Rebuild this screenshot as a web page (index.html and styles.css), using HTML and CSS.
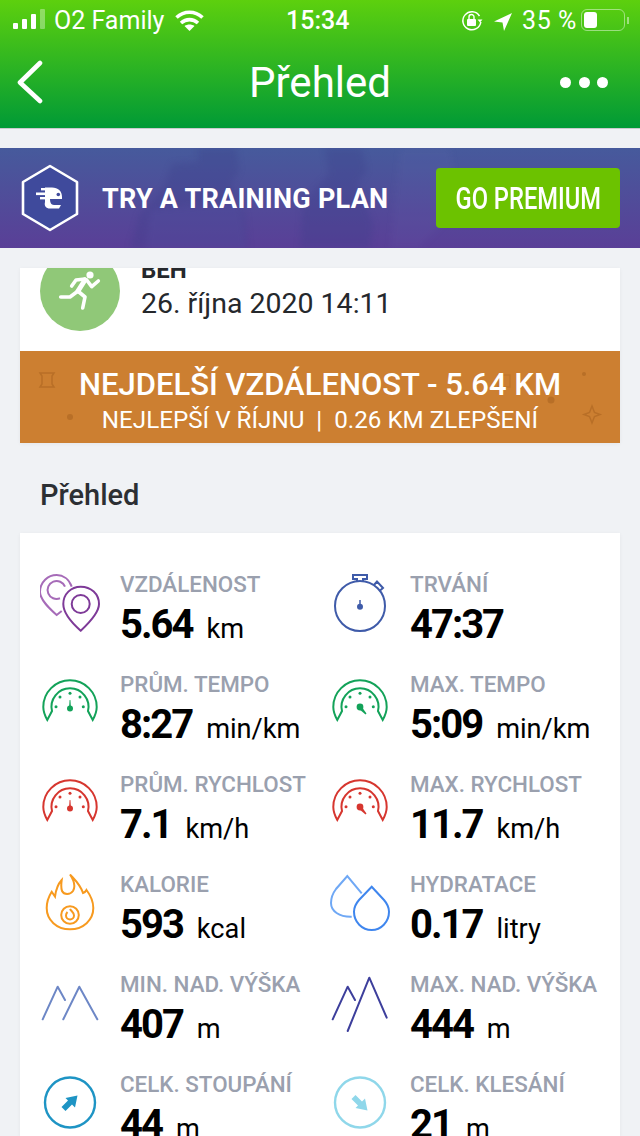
FILE: index.html
```html
<!DOCTYPE html>
<html>
<head>
  <meta charset="UTF-8" />
  <title>Přehled</title>
  <link rel="stylesheet" href="styles.css">
</head>
<body>
  <div class="top">
    <div class="status">
      <div class="status-left">
        <svg width="32" height="24" viewBox="0 0 32 24"><rect x="0" y="15" width="5" height="6" rx="1" fill="#fff"/><rect x="9" y="11" width="5" height="10" rx="1" fill="#fff"/><rect x="18" y="6" width="5" height="15" rx="1" fill="#fff"/><rect x="27" y="1" width="5" height="20" rx="1" fill="#fff" opacity="0.35"/></svg>
        <span class="carrier">O2 Family</span>
        <svg width="30" height="24" viewBox="0 0 30 24" fill="none" stroke="#fff" stroke-width="3.600"><path d="M1.500 9.500C9 2.500 20 2.500 27.500 9.500"/><path d="M6 15C11 10.500 18 10.500 23 15"/><path d="M14.500 23L9.500 18c3-2 7-2 10 0z" fill="#fff" stroke="none"/></svg>
      </div>
      <div class="clock">15:34</div>
      <div class="status-right">
        <svg width="22" height="24" viewBox="0 0 22 24" fill="none"><path d="M18.500 8A9 9 0 1 0 19.800 14" stroke="#fff" stroke-width="1.500"/><path d="M16.500 11.500h5l-2.500 3z" fill="#fff"/><rect x="6" y="11" width="9" height="7" rx="1" fill="#fff"/><path d="M8 11V9a2.500 2.500 0 0 1 5 0v2" stroke="#fff" stroke-width="1.400"/></svg>
        <svg class="arrow-gap" width="18" height="24" viewBox="0 0 18 24"><path d="M18 5L0 13.500l8.500 1 1.500 8.500z" fill="#fff"/></svg>
        <span class="battery-text">35 %</span>
        <div class="battery"><div class="battery-fill"></div></div>
        <div class="battery-nub"></div>
      </div>
    </div>
    <div class="nav">
      <svg class="back" width="28" height="44" viewBox="0 0 28 44" fill="none"><path d="M24 3L4 22.500 24 41" stroke="#fff" stroke-width="4.600" stroke-linecap="round" stroke-linejoin="round"/></svg>
      <div class="nav-title">Přehled</div>
      <div class="dots"><span></span><span></span><span></span></div>
    </div>
  </div>

  <div class="banner">
    <svg class="banner-photo" width="640" height="100" viewBox="0 0 640 100"><path d="M198 0h38l3 22-8 14 14 30 3 34H130l10-34 24-26 8-24 26-2z" fill="#3a3c88" opacity="0.28"/><path d="M325 0h36l6 22-10 14 16 40-3 24h-70l3-44 26-30z" fill="#3a3c88" opacity="0.28"/><path d="M150 62l90-8 6 46h-100z" fill="#6a63b8" opacity="0.14"/><path d="M400 0h50l10 60-40 40h-30z" fill="#7a80c0" opacity="0.07"/></svg>
    <svg class="hex" width="60" height="68" viewBox="0 0 60 68"><path d="M30 2l27 16v32L30 66 3 50V18z" fill="#3f4a9c" stroke="#fff" stroke-width="2.600" stroke-linejoin="round"/><path d="M25 23.500h7c6 0 10 3.500 10 9.500v2H30c0 3 1 6 4 6h7l-2 3.500h-9c-4 0-6-2.500-5-6.500z" fill="#fff"/><rect x="21" y="24" width="6" height="2.400" fill="#fff"/><rect x="16" y="28.500" width="11" height="2.600" fill="#fff"/><rect x="20" y="33" width="7" height="2.400" fill="#fff"/><circle cx="38.300" cy="30.500" r="1.800" fill="#3f4a9c"/></svg>
    <div class="banner-text">TRY A TRAINING PLAN</div>
    <div class="premium"><span>GO PREMIUM</span></div>
  </div>

  <div class="activity-clip">
    <div class="activity">
      <div class="activity-head">
        <div class="activity-circle">
          <svg width="80" height="80" viewBox="0 0 80 80" fill="none" stroke="#fff" stroke-width="3.600" stroke-linecap="round" stroke-linejoin="round"><circle cx="50" cy="24" r="3.600" fill="#fff" stroke="none"/><path d="M45 28l-9 1-4.300 6"/><path d="M46.700 29l5 6.700 6.600-5.700"/><path d="M45 29l-7 11" stroke-width="5"/><path d="M38 40l-8 6H20.700"/><path d="M39 41l6 5-2.300 11"/></svg>
        </div>
        <div class="activity-info">
          <div class="activity-type">BĚH</div>
          <div class="activity-date">26. října 2020 14:11</div>
        </div>
      </div>
      <div class="record">
        <svg class="record-bg" width="600" height="92" viewBox="0 0 600 92" fill="#b86f27" stroke="none"><path d="M20 22h14l-2 3v8l2 3H20l2-3v-8z" fill="none" stroke="#b86f27" stroke-width="1.500"/><circle cx="50" cy="66" r="3"/><circle cx="531" cy="49" r="3.500"/><circle cx="564" cy="23" r="2"/><path d="M478 24h12v12h-12z" fill="none" stroke="#b86f27" stroke-width="1.500" opacity="0.5"/><path d="M572 55l2.500 6.500 5.500 2-5.500 2-2.500 6.500-2.500-6.500-5.500-2 5.500-2z" fill="none" stroke="#b86f27" stroke-width="1.500"/></svg>
        <div class="record-title">NEJDELŠÍ VZDÁLENOST - 5.64 KM</div>
        <div class="record-sub">NEJLEPŠÍ V ŘÍJNU &nbsp;|&nbsp; 0.26 KM ZLEPŠENÍ</div>
      </div>
    </div>
  </div>

  <div class="section-title">Přehled</div>

  <div class="stats">
    <div class="stat">
      <svg class="icon" width="60" height="60" viewBox="0 0 60 60" fill="none" stroke-width="2"><path d="M31.700 12.700C29 5 23 1 16.700 1 8 1 0 8 0 18c0 8 10 17 16.700 23l5-4" stroke="#a66bb8"/><path d="M25 12.700a9 9 0 1 0-5 11.600" stroke="#a66bb8"/><path d="M40.700 12.700C51 12.700 59 20 59 30c0 9-10 19-18.300 26.700C32 49 23.300 39 23.300 30c0-10 7.700-17.300 17.400-17.300z" stroke="#7e3a98"/><circle cx="40.700" cy="30" r="9" stroke="#7e3a98"/></svg>
      <div>
        <div class="label">VZDÁLENOST</div>
        <div class="value">5.64<span class="unit">km</span></div>
      </div>
    </div>
    <div class="stat">
      <svg class="icon" width="60" height="60" viewBox="0 0 60 60" fill="none" stroke="#3f5ba9" stroke-width="2"><circle cx="30" cy="32" r="25"/><path d="M27 7V5h-4V1h14v4h-4v2M44 11l3-3.500 6 6.500-3.500 3"/><circle cx="30" cy="32.700" r="3" fill="#3f5ba9" stroke="none"/><path d="M30 32v-6" stroke-width="1.500"/></svg>
      <div>
        <div class="label">TRVÁNÍ</div>
        <div class="value">47:37</div>
      </div>
    </div>
    <div class="stat">
      <svg class="icon" width="60" height="60" viewBox="0 0 60 60" fill="none" stroke="#13a259" stroke-width="2"><path d="M7.300 46C4.500 41 3.300 37 3.300 33a26.700 26.700 0 0 1 53.400 0c0 4-1.200 8-4 13L48 37A18.500 18.500 0 1 0 12 37z"/><g fill="#13a259" stroke="none"><circle cx="30" cy="19.300" r="1.500"/><circle cx="20" cy="23" r="1.500"/><circle cx="40" cy="23" r="1.500"/><circle cx="16" cy="32.700" r="1.500"/><circle cx="43.300" cy="32.700" r="1.500"/><circle cx="30" cy="34.500" r="3"/><path d="M29 34l.6-8h.8l.6 8z"/></g></svg>
      <div>
        <div class="label">PRŮM. TEMPO</div>
        <div class="value">8:27<span class="unit">min/km</span></div>
      </div>
    </div>
    <div class="stat">
      <svg class="icon" width="60" height="60" viewBox="0 0 60 60" fill="none" stroke="#13a259" stroke-width="2"><path d="M7.300 46C4.500 41 3.300 37 3.300 33a26.700 26.700 0 0 1 53.400 0c0 4-1.200 8-4 13L48 37A18.500 18.500 0 1 0 12 37z"/><g fill="#13a259" stroke="none"><circle cx="30" cy="19.300" r="1.500"/><circle cx="20" cy="23" r="1.500"/><circle cx="40" cy="23" r="1.500"/><circle cx="16" cy="32.700" r="1.500"/><circle cx="43.300" cy="32.700" r="1.500"/><circle cx="30" cy="33" r="3.400"/><path d="M29 35l2.500-2.500 5 7-1 1z"/></g></svg>
      <div>
        <div class="label">MAX. TEMPO</div>
        <div class="value">5:09<span class="unit">min/km</span></div>
      </div>
    </div>
    <div class="stat">
      <svg class="icon" width="60" height="60" viewBox="0 0 60 60" fill="none" stroke="#d6362f" stroke-width="2"><path d="M7.300 46C4.500 41 3.300 37 3.300 33a26.700 26.700 0 0 1 53.400 0c0 4-1.200 8-4 13L48 37A18.500 18.500 0 1 0 12 37z"/><g fill="#d6362f" stroke="none"><circle cx="30" cy="19.300" r="1.500"/><circle cx="20" cy="23" r="1.500"/><circle cx="40" cy="23" r="1.500"/><circle cx="16" cy="32.700" r="1.500"/><circle cx="43.300" cy="32.700" r="1.500"/><circle cx="30" cy="34.500" r="3"/><path d="M29 34l.6-8h.8l.6 8z"/></g></svg>
      <div>
        <div class="label">PRŮM. RYCHLOST</div>
        <div class="value">7.1<span class="unit">km/h</span></div>
      </div>
    </div>
    <div class="stat">
      <svg class="icon" width="60" height="60" viewBox="0 0 60 60" fill="none" stroke="#d6362f" stroke-width="2"><path d="M7.300 46C4.500 41 3.300 37 3.300 33a26.700 26.700 0 0 1 53.400 0c0 4-1.200 8-4 13L48 37A18.500 18.500 0 1 0 12 37z"/><g fill="#d6362f" stroke="none"><circle cx="30" cy="19.300" r="1.500"/><circle cx="20" cy="23" r="1.500"/><circle cx="40" cy="23" r="1.500"/><circle cx="16" cy="32.700" r="1.500"/><circle cx="43.300" cy="32.700" r="1.500"/><circle cx="30" cy="33" r="3.400"/><path d="M29 35l2.500-2.500 5 7-1 1z"/></g></svg>
      <div>
        <div class="label">MAX. RYCHLOST</div>
        <div class="value">11.7<span class="unit">km/h</span></div>
      </div>
    </div>
    <div class="stat">
      <svg class="icon" width="60" height="60" viewBox="0 0 60 60" fill="none" stroke="#f79a1f" stroke-width="2"><path d="M30 .5c4 4.500 10 9.500 13 18.500 1.500-.5 3-2 3.500-3C51 22 53.300 28 53.300 34c0 12-10 21.300-23.300 21.300S6.700 46 6.700 34c0-6 2.300-12 5-16.300L15 22.500c1-7.500 3-12.500 6.700-16.500-.7 5-.7 8 .3 11 2 4 8 4 11 0 3-5 0-12-3-16.500z"/><circle cx="30" cy="41" r="8.800"/><path d="M30 35c1 2 4 3.500 4 6.500a4 4 0 0 1-8 0c0-1.500.5-2.500 1.500-3.500"/></svg>
      <div>
        <div class="label">KALORIE</div>
        <div class="value">593<span class="unit">kcal</span></div>
      </div>
    </div>
    <div class="stat">
      <svg class="icon" width="60" height="60" viewBox="0 0 60 60" fill="none" stroke-width="2"><path d="M31.700 19.300L17.300 2 6 15c-3 4-5 9-5 14 0 8 8 14 20.700 13.700" stroke="#6fa8f5"/><path d="M41.700 12.700L54 26c3.500 4 5 8 5 11.700C59 48 51 56 41.700 56 32 56 24 48 24 37.700c0-3.700 1.500-7.700 5-11.700z" stroke="#3f86ee"/></svg>
      <div>
        <div class="label">HYDRATACE</div>
        <div class="value">0.17<span class="unit">litry</span></div>
      </div>
    </div>
    <div class="stat">
      <svg class="icon" width="60" height="60" viewBox="0 0 60 60" fill="none" stroke="#6d87c6" stroke-width="2" stroke-linecap="round" stroke-linejoin="round"><path d="M2.700 45.300l15-32.600L25 26"/><path d="M23.300 45.300l16-32.600 18 32.600"/></svg>
      <div>
        <div class="label">MIN. NAD. VÝŠKA</div>
        <div class="value">407<span class="unit">m</span></div>
      </div>
    </div>
    <div class="stat">
      <svg class="icon" width="60" height="60" viewBox="0 0 60 60" fill="none" stroke="#3d3f9c" stroke-width="2" stroke-linecap="round" stroke-linejoin="round"><path d="M2.700 45.300l15-32.600L25 26"/><path d="M17.700 57L39.300 3.700l17.400 40"/></svg>
      <div>
        <div class="label">MAX. NAD. VÝŠKA</div>
        <div class="value">444<span class="unit">m</span></div>
      </div>
    </div>
    <div class="stat">
      <svg class="icon" width="60" height="60" viewBox="0 0 60 60" fill="none" stroke="#1e94c4" stroke-width="2.400"><circle cx="30" cy="28.500" r="25"/><path d="M37.500 21.500l-12 2.500 2.500 2.500-6.500 6.500 4 4 6.500-6.500 3 3z" fill="#1e94c4" stroke="none"/></svg>
      <div>
        <div class="label">CELK. STOUPÁNÍ</div>
        <div class="value">44<span class="unit">m</span></div>
      </div>
    </div>
    <div class="stat">
      <svg class="icon" width="60" height="60" viewBox="0 0 60 60" fill="none" stroke="#8fd7ea" stroke-width="2.400"><circle cx="30" cy="28.500" r="25"/><path d="M37.500 36.500l-12-2.500 2.500-2.500-6.500-6.500 4-4 6.500 6.500 3-3z" fill="#8fd7ea" stroke="none"/></svg>
      <div>
        <div class="label">CELK. KLESÁNÍ</div>
        <div class="value">21<span class="unit">m</span></div>
      </div>
    </div>
  </div>
</body>
</html>
```

FILE: styles.css
```css
body {
  font-family: Roboto, "Liberation Sans", sans-serif;
  background-color: #f0f2f5;
  margin: 0;
  padding: 0;
  height: 1136px;
  overflow: hidden;
  color: #000;
}
.top {
  height: 128px;
  background: linear-gradient(#5dd00e, #009a36);
  border-bottom: 1px solid #c9cbcd;
  color: #fff;
}
.status {
  height: 40px;
  padding: 0 11px 0 13px;
  display: flex;
  align-items: center;
  justify-content: space-between;
  position: relative;
}
.status-left, .status-right {
  display: flex;
  align-items: center;
}
.carrier {
  font-size: 25px;
  margin: 0 11px 0 9px;
}
.clock {
  position: absolute;
  left: 286px;
  font-size: 25px;
  font-weight: 500;
}
.arrow-gap {
  margin: 0 10px 0 11px;
}
.battery-text {
  font-size: 25px;
  letter-spacing: 0.600px;
  margin-right: 4px;
}
.battery {
  width: 38px;
  height: 16px;
  padding: 2px;
  border: 1.500px solid rgba(255,255,255,0.45);
  border-radius: 6px;
}
.battery-fill {
  width: 13px;
  height: 16px;
  background-color: #fff;
  border-radius: 3px;
}
.battery-nub {
  width: 2px;
  height: 7px;
  margin-left: 2px;
  background-color: rgba(255,255,255,0.45);
}
.nav {
  height: 88px;
  padding: 0 32px 4px 16px;
  box-sizing: border-box;
  display: flex;
  align-items: center;
  justify-content: space-between;
  position: relative;
}
.nav-title {
  position: absolute;
  left: 0;
  right: 0;
  text-align: center;
  font-size: 42px;
}
.dots {
  display: flex;
  gap: 7.500px;
}
.dots span {
  width: 11px;
  height: 11px;
  border-radius: 50%;
  background-color: #fff;
}
.banner {
  height: 100px;
  margin-top: 19px;
  background: linear-gradient(#465a9c, #5a3f97);
  display: flex;
  align-items: center;
  padding: 0 20px;
  position: relative;
  overflow: hidden;
}
.banner-photo {
  position: absolute;
  left: 0;
  top: 0;
  filter: blur(3px);
}
.hex {
  position: relative;
  flex: none;
}
.banner-text {
  position: relative;
  top: 1px;
  color: #fff;
  font-size: 27px;
  font-weight: 700;
  letter-spacing: 0.250px;
  margin-left: 22px;
  white-space: nowrap;
}
.premium {
  position: relative;
  margin-left: auto;
  width: 184px;
  height: 60px;
  background-color: #6cc200;
  border-radius: 4px;
  color: #fff;
  font-size: 32px;
  font-weight: 500;
  display: flex;
  align-items: center;
  justify-content: center;
  white-space: nowrap;
}
.premium span {
  flex: none;
  transform: scaleX(0.74);
}
.activity-clip {
  margin: 20px 20px 0;
  height: 175px;
  overflow: hidden;
  box-shadow: 0 1px 4px rgba(0,0,0,0.05);
}
.activity {
  margin-top: -18px;
  background-color: #fff;
}
.activity-head {
  height: 101px;
  padding-left: 20px;
  display: flex;
  gap: 21px;
}
.activity-circle {
  width: 80px;
  height: 80px;
  margin-top: 1px;
  border-radius: 50%;
  background-color: #90c878;
}
.activity-type {
  font-size: 24px;
  font-weight: 700;
  line-height: 28px;
  color: #25282c;
  margin-top: 6px;
}
.activity-date {
  font-size: 28.500px;
  line-height: 34px;
  margin-top: 3px;
  color: #25282c;
}
.record {
  height: 92px;
  background-color: #cc7f31;
  color: #fff;
  text-align: center;
  position: relative;
  box-sizing: border-box;
  padding-top: 16px;
}
.record-bg {
  position: absolute;
  left: 0;
  top: 0;
}
.record-title {
  position: relative;
  font-size: 31px;
  font-weight: 500;
  line-height: 36px;
}
.record-sub {
  position: relative;
  font-size: 24.200px;
  line-height: 32px;
  margin-top: 1px;
}
.section-title {
  font-size: 29px;
  font-weight: 500;
  line-height: 32px;
  color: #2c2f33;
  padding: 36px 0 22px 40px;
}
.stats {
  margin: 0 20px;
  height: 604px;
  background-color: #fff;
  padding: 40px 0 0 20px;
  box-sizing: border-box;
  display: grid;
  grid-template-columns: 290px 290px;
  grid-auto-rows: 100px;
  box-shadow: 0 1px 4px rgba(0,0,0,0.05);
}
.stat {
  display: flex;
  gap: 20px;
}
.icon {
  flex: none;
  margin-top: 1px;
}
.label {
  font-size: 22.400px;
  font-weight: 500;
  line-height: 22px;
  color: #9aa0ae;
  white-space: nowrap;
}
.value {
  font-size: 40px;
  font-weight: 700;
  line-height: 46px;
  letter-spacing: -2px;
  margin-top: 7px;
  white-space: nowrap;
}
.unit {
  font-size: 27.200px;
  font-weight: 400;
  letter-spacing: 0;
  margin-left: 14px;
}
```
